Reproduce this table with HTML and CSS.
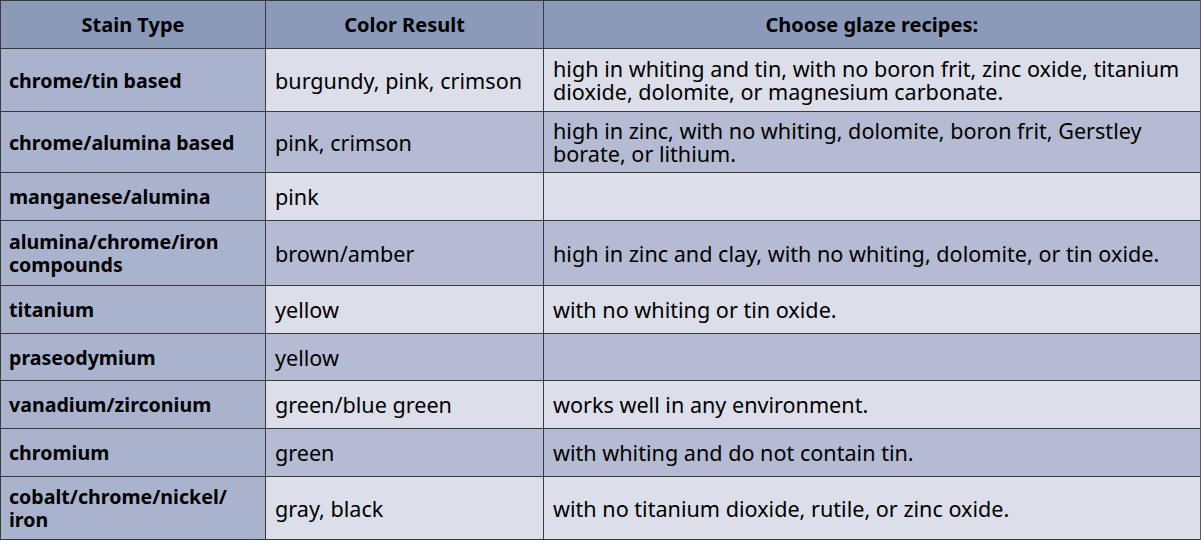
FILE: index.html
```html
<!DOCTYPE html>
<html>
<head>
<meta charset="utf-8">
<link rel="stylesheet" href="styles.css">
</head>
<body>
<table class="stain-table">
  <colgroup>
    <col class="c1"><col class="c2"><col class="c3">
  </colgroup>
  <thead>
    <tr class="r-head"><th>Stain Type</th><th>Color Result</th><th>Choose glaze recipes:</th></tr>
  </thead>
  <tbody>
    <tr class="light h63"><td class="type">chrome/tin based</td><td>burgundy, pink, crimson</td><td>high in whiting and tin, with no boron frit, zinc oxide, titanium dioxide, dolomite, or magnesium carbonate.</td></tr>
    <tr class="dark h61"><td class="type">chrome/alumina based</td><td>pink, crimson</td><td>high in zinc, with no whiting, dolomite, boron frit, Gerstley borate, or lithium.</td></tr>
    <tr class="light h48"><td class="type">manganese/alumina</td><td>pink</td><td></td></tr>
    <tr class="dark h65"><td class="type">alumina/chrome/iron compounds</td><td>brown/amber</td><td>high in zinc and clay, with no whiting, dolomite, or tin oxide.</td></tr>
    <tr class="light h48"><td class="type">titanium</td><td>yellow</td><td>with no whiting or tin oxide.</td></tr>
    <tr class="dark h47"><td class="type">praseodymium</td><td>yellow</td><td></td></tr>
    <tr class="light h48"><td class="type">vanadium/zirconium</td><td>green/blue green</td><td>works well in any environment.</td></tr>
    <tr class="dark h48"><td class="type">chromium</td><td>green</td><td>with whiting and do not contain tin.</td></tr>
    <tr class="light h63"><td class="type">cobalt/chrome/nickel/ iron</td><td>gray, black</td><td>with no titanium dioxide, rutile, or zinc oxide.</td></tr>
  </tbody>
</table>
</body>
</html>
```
FILE: styles.css
```css
html, body {
  margin: 0;
  padding: 0;
  background: #ffffff;
}
.stain-table {
  border-collapse: collapse;
  table-layout: fixed;
  width: 1200px;
  font-family: "Noto Sans", "Open Sans", sans-serif;
  font-size: 21.6px;
  line-height: 23px;
  color: #000;
}
.c1 { width: 265px; }
.c2 { width: 278px; }
.c3 { width: 657px; }
.stain-table th,
.stain-table td {
  border: 1px solid #3a3a3a;
  padding: 0 4px 0 9px;
  vertical-align: middle;
  text-align: left;
}
.stain-table th {
  background: #8c9aba;
  text-align: center;
  font-weight: bold;
  font-size: 20px;
  padding: 0 10px;
}
.stain-table tr > :last-child {
  border-right: 2px solid #5a5a5e;
}
.r-head { height: 48px; }
.h47 { height: 47px; }
.h48 { height: 48px; }
.h61 { height: 61px; }
.h63 { height: 63px; }
.h65 { height: 65px; }
.light td { background: #dcdfea; }
.dark td { background: #b5bbd3; }
.stain-table td.type {
  background: #aab3ce;
  font-weight: bold;
  font-size: 19.6px;
  padding-left: 8px;
}
```
